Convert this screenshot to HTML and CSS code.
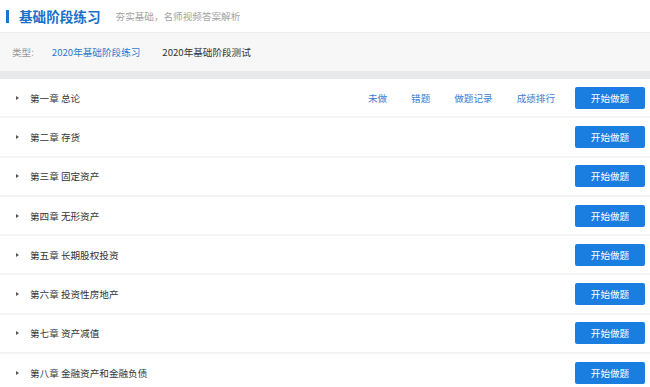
FILE: index.html
```html
<!DOCTYPE html>
<html lang="zh">
<head>
    <meta charset="UTF-8">
    <title>基础阶段练习</title>
    <link rel="stylesheet" href="styles.css">
</head>
<body>
    <div class="header">
        <span class="bar"></span>
        <h1>基础阶段练习</h1>
        <span class="subtitle">夯实基础，名师视频答案解析</span>
    </div>

    <div class="type-bar">
        <span class="label">类型:</span>
        <a class="type active">2020年基础阶段练习</a>
        <a class="type">2020年基础阶段测试</a>
    </div>

    <div class="gap"></div>

    <ul class="chapters">
        <li class="chapter">
            <span class="arrow"></span>
            <span class="name">第一章 总论</span>
            <div class="links">
                <a>未做</a>
                <a>错题</a>
                <a>做题记录</a>
                <a>成绩排行</a>
            </div>
            <button class="start-btn">开始做题</button>
        </li>
        <li class="chapter">
            <span class="arrow"></span>
            <span class="name">第二章 存货</span>
            <button class="start-btn">开始做题</button>
        </li>
        <li class="chapter">
            <span class="arrow"></span>
            <span class="name">第三章 固定资产</span>
            <button class="start-btn">开始做题</button>
        </li>
        <li class="chapter">
            <span class="arrow"></span>
            <span class="name">第四章 无形资产</span>
            <button class="start-btn">开始做题</button>
        </li>
        <li class="chapter">
            <span class="arrow"></span>
            <span class="name">第五章 长期股权投资</span>
            <button class="start-btn">开始做题</button>
        </li>
        <li class="chapter">
            <span class="arrow"></span>
            <span class="name">第六章 投资性房地产</span>
            <button class="start-btn">开始做题</button>
        </li>
        <li class="chapter">
            <span class="arrow"></span>
            <span class="name">第七章 资产减值</span>
            <button class="start-btn">开始做题</button>
        </li>
        <li class="chapter">
            <span class="arrow"></span>
            <span class="name">第八章 金融资产和金融负债</span>
            <button class="start-btn">开始做题</button>
        </li>
    </ul>
</body>
</html>
```

FILE: styles.css
```css
body {
    margin: 0;
    font-family: "Noto Sans CJK SC", "Noto Sans", sans-serif;
    font-size: 9.6px;
    color: #333;
    background: #fff;
}
.header {
    display: flex;
    align-items: center;
    height: 32px;
    padding-left: 6px;
    border-bottom: 1px solid #ececec;
}
.bar {
    width: 3px;
    height: 13px;
    background: #1a75d2;
    margin-right: 10px;
}
.header h1 {
    margin: 0;
    font-size: 13.6px;
    font-weight: bold;
    color: #1a6fc8;
}
.subtitle {
    margin-left: 15px;
    font-size: 9.6px;
    color: #a3a3a3;
}
.type-bar {
    display: flex;
    align-items: center;
    height: 38px;
    padding-left: 12px;
    background: #f7f7f7;
}
.type-bar .label {
    color: #999;
    margin-right: 18px;
}
.type-bar .type {
    color: #333;
    margin-right: 22px;
}
.type-bar .type.active {
    color: #2b7ad0;
}
.gap {
    height: 8px;
    background: #e8e9eb;
}
.chapters {
    list-style: none;
    margin: 0;
    padding: 0;
}
.chapter {
    display: flex;
    align-items: center;
    height: 37.3px;
    padding: 0 5px 0 16px;
    border-bottom: 2px solid #f4f4f4;
}
.arrow {
    width: 0;
    height: 0;
    border-top: 2.5px solid transparent;
    border-bottom: 2.5px solid transparent;
    border-left: 3px solid #555;
    margin-right: 11px;
}
.name {
    flex: 1;
    color: #333;
}
.links {
    display: flex;
    gap: 24px;
    margin-right: 20px;
}
.links a {
    color: #3a7fd0;
}
.start-btn {
    width: 70px;
    height: 22px;
    border: none;
    border-radius: 2px;
    background: #1a7de0;
    color: #fff;
    font-family: inherit;
    font-size: 9.6px;
    padding: 0;
    cursor: pointer;
}
```
